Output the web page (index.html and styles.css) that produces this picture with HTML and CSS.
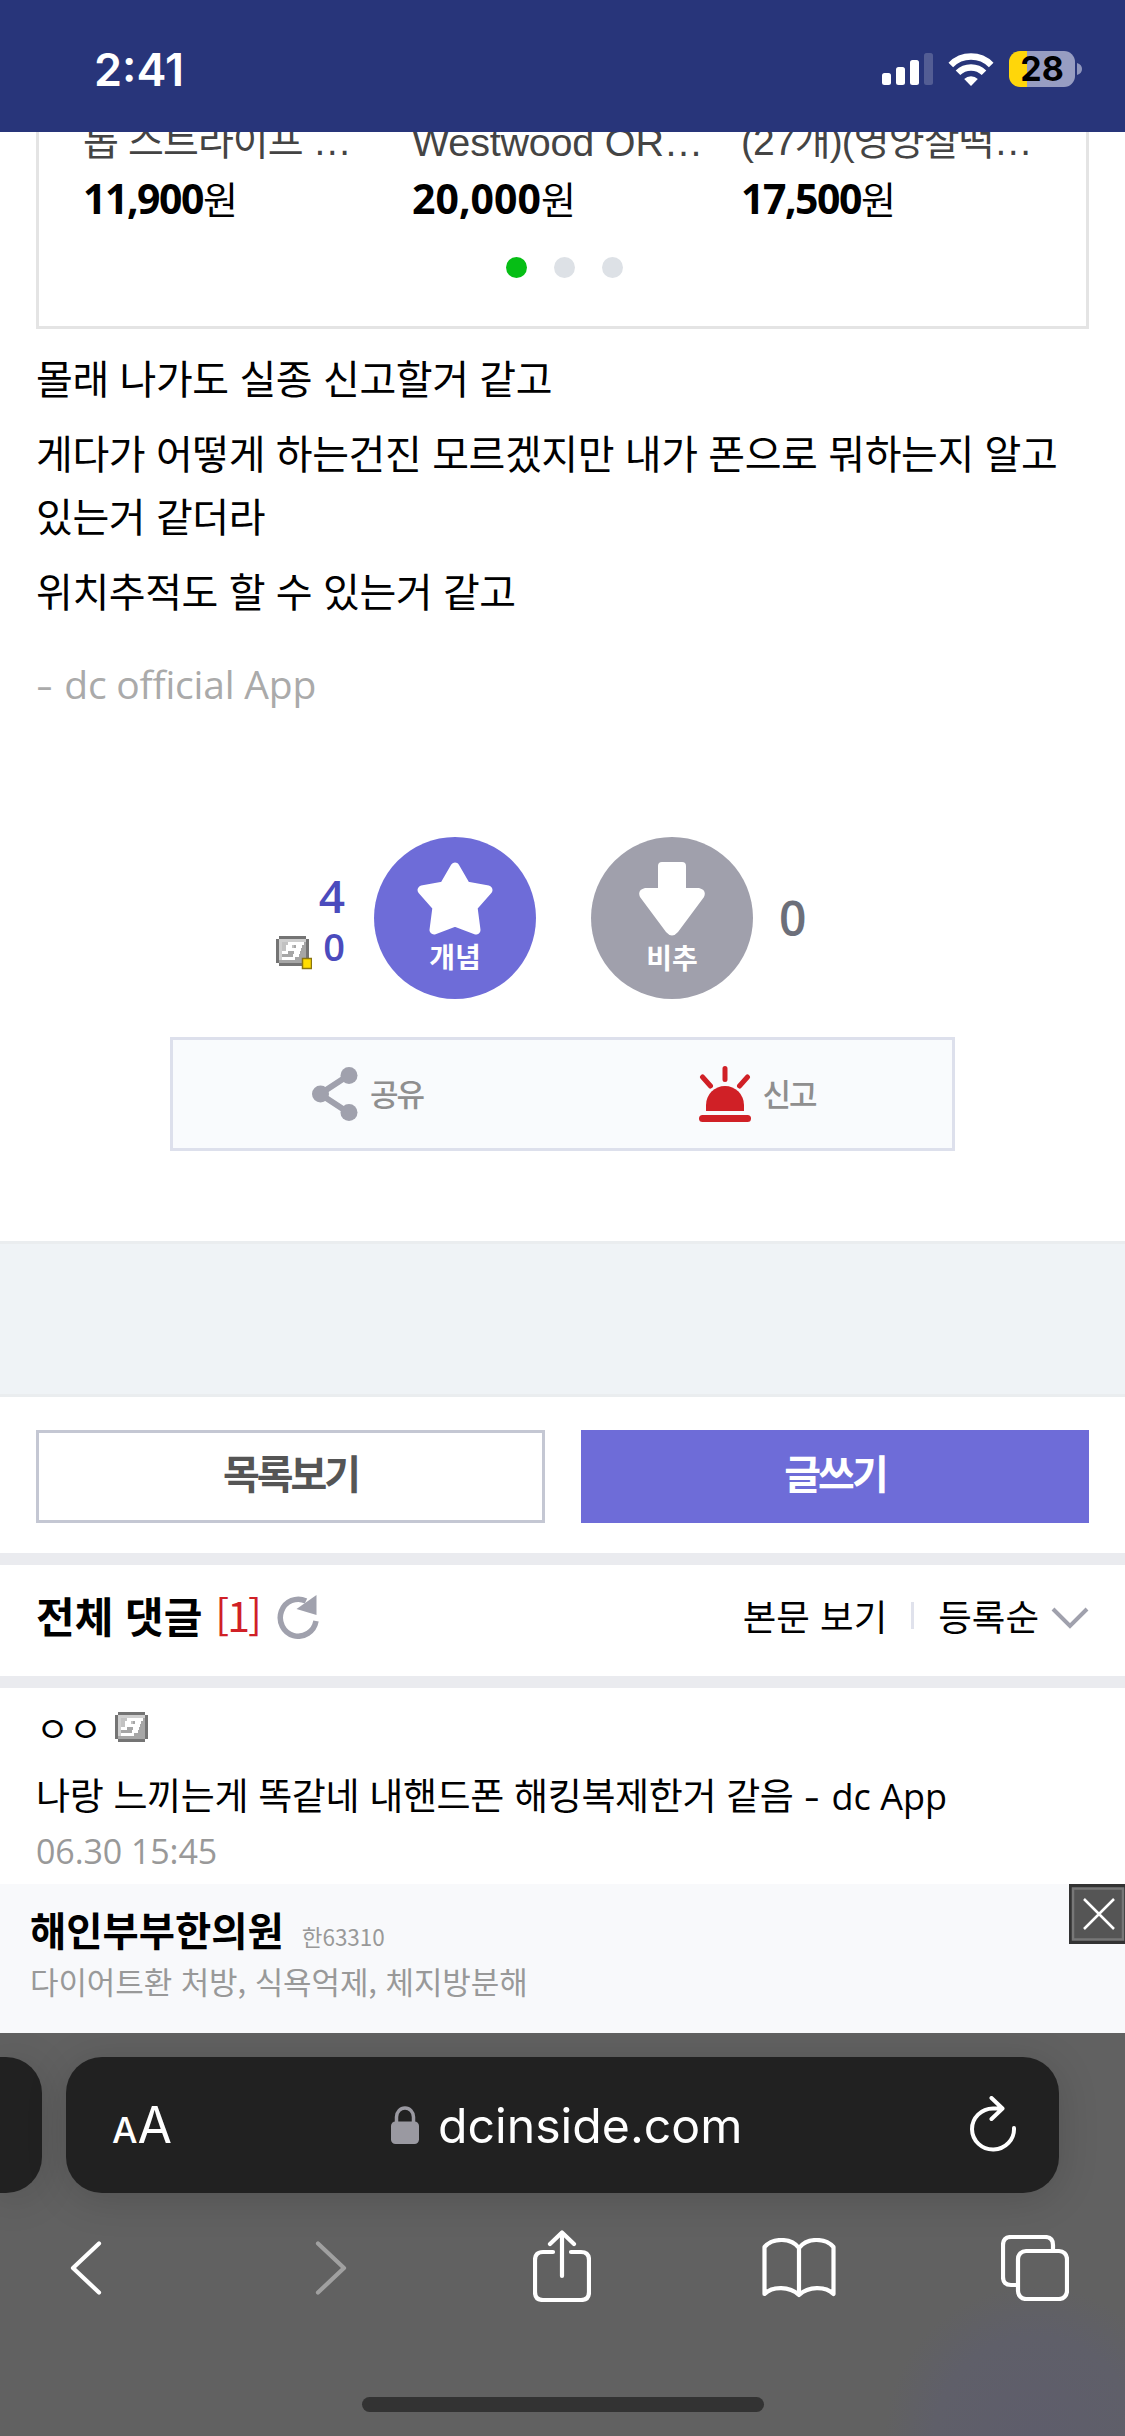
FILE: index.html
```html
<!DOCTYPE html>
<html lang="ko">
<head>
<meta charset="utf-8">
<title>dcinside.com</title>
<link rel="stylesheet" href="styles.css">
</head>
<body>
<div class="screen">
  <header class="status">
    <span class="clock">2:41</span>
    <svg class="signal" width="51" height="32" viewBox="0 0 51 32" fill="#fff"><rect y="20" width="9" height="12" rx="2.5"/><rect x="14" y="14" width="9" height="18" rx="2.5"/><rect x="28" y="7" width="9" height="25" rx="2.5"/><rect x="42" width="9" height="32" rx="2.500" opacity=".2"/></svg>
    <svg class="wifi" width="46" height="33" viewBox="0 0 46 33" fill="none" stroke="#fff" stroke-width="6.500"><path d="M2.800 12a28.500 28.500 0 0 1 40.400 0"/><path d="M10 19.800a18.500 18.500 0 0 1 26 0"/><path d="M23 33l-6.800-7a9.600 9.600 0 0 1 13.600 0z" fill="#fff" stroke="none"/></svg>
    <span class="battery">28</span>
    <svg class="nub" width="5" height="12" viewBox="0 0 5 12"><path d="M0 0q5 1.500 5 6t-5 6z" fill="#8f96bd"/></svg>
  </header>

  <main class="page">
    <section class="shop">
      <div class="goods">
        <div class="item"><p class="name ko">롭 스트라이프 …</p><p class="price"><b class="tight">11,900</b>원</p></div>
        <div class="item"><p class="name">Westwood OR…</p><p class="price"><b>20,000</b>원</p></div>
        <div class="item"><p class="name ko">(27개)(영양찰떡…</p><p class="price"><b class="tight">17,500</b>원</p></div>
      </div>
      <div class="dots"><i class="on"></i><i></i><i></i></div>
    </section>

    <article class="post">
      <p>몰래 나가도 실종 신고할거 같고</p>
      <p>게다가 어떻게 하는건진 모르겠지만 내가 폰으로 뭐하는지 알고 있는거 같더라</p>
      <p>위치추적도 할 수 있는거 같고</p>
      <p class="sign"><span class="dash">-</span> dc official App</p>
    </article>

    <section class="vote">
      <div class="up-count">
        <span class="total">4</span>
        <span class="fixed"><svg width="36" height="34" viewBox="0 0 36 34"><use href="#gal"/><rect x="26.500" y="22.500" width="9" height="10" fill="#fd0" stroke="#8a7510" stroke-width="1.500"/></svg>0</span>
      </div>
      <div class="circle good">
        <svg width="76" height="73" viewBox="0 0 76 73"><path d="M38 5L49 24L71 28L56 45L59 68L38 60L17 68L20 45L5 28L27 24Z" fill="#fff" stroke="#fff" stroke-width="9" stroke-linejoin="round"/></svg>
        <span>개념</span>
      </div>
      <div class="circle bad">
        <svg width="66" height="74" viewBox="0 0 66 74"><path d="M23 0h20q4 0 4 4v22h13q8 2 5 9L39 70q-6 7-12 0L1 35q-3-7 5-9h13V4q0-4 4-4z" fill="#fff"/></svg>
        <span>비추</span>
      </div>
      <span class="down-count">0</span>
    </section>

    <div class="actions">
      <a class="share"><svg width="46" height="54" viewBox="0 0 46 54" fill="#a0a1ad"><path d="M37 8L8 27l29 19" fill="none" stroke="#a0a1ad" stroke-width="6"/><circle cx="8.500" cy="27" r="8.500"/><circle cx="37" cy="8.500" r="8.500"/><circle cx="37" cy="45.500" r="8.500"/></svg><span>공유</span></a>
      <a class="report"><svg width="52" height="56" viewBox="0 0 52 56" fill="#d02026"><rect y="49" width="52" height="7" rx="3.500"/><path d="M7 45V39a19 19 0 0 1 38 0v6z"/><path d="M26 2.500v11M3.500 11l8 9M48.500 11l-8 9" stroke="#d02026" stroke-width="5" stroke-linecap="round"/></svg><span>신고</span></a>
    </div>

    <div class="banner"></div>

    <div class="buttons"><a class="btn list">목록보기</a><a class="btn write">글쓰기</a></div>

    <div class="comment-head">
      <h2>전체 댓글</h2><span class="count">[1]</span>
      <svg class="refresh" width="42" height="44" viewBox="0 0 42 44"><path d="M29 6A18 18.500 0 1 0 39 26" fill="none" stroke="#a0a1ad" stroke-width="5.500"/><path d="M39.500 0v20l-20-6z" fill="#a0a1ad"/></svg>
      <span class="view">본문 보기</span><i class="sep"></i><span class="order">등록순</span>
      <svg class="chev" width="38" height="24" viewBox="0 0 38 24"><path d="M2 3l17 17L36 3" fill="none" stroke="#a0a1ad" stroke-width="4"/></svg>
    </div>

    <article class="comment">
      <div class="author">ㅇㅇ<svg width="34" height="30" viewBox="0 0 34 30"><g id="gal"><path d="M3 0h27v3h3v24h-3v3H3v-3H0V3h3z" fill="#747474"/><path d="M3 3h27v24H3z" fill="#a6a6a6"/><path d="M3 3h27v3H3zM3 6h3v18H3z" fill="#cfcfcf"/><path d="M6 6h12v9H6z" fill="#c2c2c2"/><path d="M12 6h16v3H12zM10 9h6v3h-6zM20 9h6v3h-6zM10 12h15v3H10zM18 15h6v3h-6zM6 15h6v3H6zM17 18h6v3h-6zM6 21h13v3H6z" fill="#fff"/></g></svg></div>
      <p class="text">나랑 느끼는게 똑같네 내핸드폰 해킹복제한거 같음 <span class="dash">-</span><span> dc App</span></p>
      <time>06.30 15:45</time>
    </article>

    <aside class="ad">
      <div class="ad-line"><strong>해인부부한의원</strong><small>한63310</small></div>
      <p>다이어트환 처방, 식욕억제, 체지방분해</p>
      <svg class="close" width="56" height="60" viewBox="0 0 56 60"><path d="M0 0h56v60H0z" fill="#333"/><path d="M4 4.500h50v51H4z" fill="#555" stroke="#777" stroke-width="2.500"/><path d="M15 15l30 30M45 15L15 45" stroke="#fff" stroke-width="2.500"/></svg>
    </aside>
  </main>

  <footer class="browser">
    <div class="tabs">
      <div class="prev-tab"></div>
      <div class="url">
        <span class="aa"><small>A</small>A</span>
        <svg class="lock" width="28" height="38" viewBox="0 0 28 38"><path d="M5.500 18v-7a8.500 9 0 0 1 17 0v7" fill="none" stroke="#9a99a1" stroke-width="3.500"/><rect y="15.500" width="28" height="22.500" rx="4.500" fill="#9a99a1"/></svg>
        <span class="domain">dcinside.com</span>
        <svg class="reload" width="48" height="56" viewBox="0 0 48 56" fill="none" stroke="#fff" stroke-width="4" stroke-linecap="round" stroke-linejoin="round"><path d="M32 12.500H23A21 20.500 0 1 0 44 32M21.500 2l11 10.500-11 10.500"/></svg>
      </div>
    </div>
    <nav class="tools">
      <svg class="back" width="32" height="54" viewBox="0 0 32 54"><path d="M29 2.500L3 27l26 24.500" class="ln"/></svg>
      <svg class="fwd" width="32" height="54" viewBox="0 0 32 54"><path d="M3 2.500L29 27 3 51.500" class="ln"/></svg>
      <svg class="send" width="58" height="72" viewBox="0 0 58 72"><path d="M20 22H10q-8 0-8 8v32q0 8 8 8h38q8 0 8-8V30q0-8-8-8H38M29 46V2.500M17 14L29 2.500 41 14" class="ln"/></svg>
      <svg class="book" width="74" height="60" viewBox="0 0 74 60"><path d="M37 10C29-.5 11-.5 2.500 9v47c8-8 25-8 34.500 1 9.500-9 26.500-9 34.500-1V9C63-.5 45-.5 37 10zM37 10v47" class="ln"/></svg>
      <svg class="stack" width="68" height="66" viewBox="0 0 68 66"><path d="M17 50h-7q-8 0-8-8V10q0-8 8-8h34q8 0 8 8v5" class="ln"/><rect x="17" y="16" width="49" height="48" rx="8" class="ln"/></svg>
    </nav>
    <div class="home"></div>
  </footer>
</div>
</body>
</html>
```
FILE: styles.css
```css
* { box-sizing: border-box; }
body, p, h2 { margin: 0; }
svg { display: block; flex: none; }
.screen {
  width: 1125px; height: 2436px; overflow: hidden;
  display: flex; flex-direction: column;
  background: #fff; color: #000;
  font-family: "Noto Sans CJK KR", sans-serif;
}

.status {
  height: 132px; flex: none; background: #28357a; color: #fff;
  display: flex; align-items: center; padding: 6px 43px 0 94px;
}
.clock { font: 600 45px/1 Inter, sans-serif; flex: 1; }
.wifi { margin-left: 15px; }
.battery {
  margin-left: 15px; width: 66px; height: 36px; border-radius: 11px;
  background: linear-gradient(90deg, #ffd60a 18px, #979dc2 18px);
  color: #000; font: 700 34px/36px Inter, sans-serif; text-align: center;
}
.nub { margin-left: 2px; }

.page { height: 1901px; flex: none; display: flex; flex-direction: column; }
.shop {
  height: 197px; margin: 0 36px; border: solid #e4e4e4; border-width: 0 3px 3px;
  overflow: hidden; flex: none;
}
.goods { display: grid; grid-template-columns: 329px 329px 1fr; padding-left: 44px; margin-top: -18px; }
.name { font: 39.500px/56px "Liberation Sans", "Noto Sans CJK KR", sans-serif; color: #444; white-space: nowrap; height: 56px; letter-spacing: -.2px; }
.name.ko { font-size: 39px; letter-spacing: -.9px; }
.price { font-size: 38px; line-height: 56px; height: 58px; }
.price b { font-family: "Open Sans", sans-serif; font-size: 41px; }
.price .tight { letter-spacing: -1.500px; }
.dots { display: flex; justify-content: center; gap: 27px; margin-top: 29px; padding-left: 3px; }
.dots i { width: 21px; height: 21px; border-radius: 50%; background: #dde1e6; }
.dots .on { background: #06be15; }

.post { padding: 17px 36px 0; height: 507px; flex: none; font-size: 40px; line-height: 63px; letter-spacing: -.42px; }
.post p + p { margin-top: 12px; }
.post .sign { margin-top: 30px; color: #aaa; font-family: "Open Sans", sans-serif; font-size: 39px; letter-spacing: -.2px; }
.dash { display: inline-block; transform: scaleX(1.35); transform-origin: left; margin-right: 6px; }

.vote { height: 163px; flex: none; display: flex; align-items: center; font-family: "Open Sans", sans-serif; font-weight: 600; }
.up-count { width: 374px; padding: 4px 29px 0 0; display: flex; flex-direction: column; align-items: flex-end; color: #4b4bbd; }
.total { font-size: 46px; line-height: 52px; }
.fixed { font-size: 38px; line-height: 50px; display: flex; align-items: center; gap: 11px; }
.fixed svg { margin-top: 14px; }
.circle { width: 162px; height: 162px; border-radius: 50%; display: flex; flex-direction: column; align-items: center; padding-top: 25px; color: #fff; font: 700 28px/42px "Noto Sans CJK KR", sans-serif; }
.good { background: #6e6cd8; }
.bad { background: #a0a0ac; margin-left: 55px; }
.down-count { margin-left: 26px; font-size: 48px; color: #6c6f7a; }

.actions { margin: 38px 170px 0; height: 114px; flex: none; border: 3px solid #dde0ec; background: #f9fbfd; display: grid; grid-template-columns: 1fr 1fr; color: #8f8f8f; font-size: 31px; font-weight: 500; letter-spacing: -2px; }
.actions a { display: flex; align-items: center; gap: 12px; }
.actions span { padding-bottom: 4px; }
.share { padding-left: 139px; }
.report { padding-left: 136px; }

.banner { margin-top: 90px; height: 156px; flex: none; background: #eff3f6; border: solid #eaedef; border-width: 3px 0; }
.buttons { display: grid; grid-template-columns: 509px 508px; gap: 36px; padding: 33px 36px 30px; border-bottom: 12px solid #eaebef; }
.btn { height: 93px; border: 3px solid #c4c7d3; font-size: 40px; font-weight: 700; letter-spacing: -3px; line-height: 79px; text-align: center; color: #555; }
.write { background: #6e6cd8; border-color: #6e6cd8; color: #fff; }

.comment-head { height: 123px; flex: none; border-bottom: 12px solid #eaebef; display: flex; align-items: center; padding: 0 36px 10px; font-size: 36.500px; }
.comment-head h2 { font-size: 42px; font-weight: 700; padding-bottom: 2px; }
.count { color: #d02026; margin-left: 13px; font-size: 41px; letter-spacing: -2px; padding-bottom: 3px; }
.refresh { margin-left: 17px; margin-right: auto; margin-top: 2px; }
.sep { width: 3px; height: 27px; background: #e0e2ec; margin: 0 24px; }
.chev { margin-left: 12px; margin-top: 4px; }

.comment { height: 196px; flex: none; padding: 12px 36px 0; }
.author { display: flex; align-items: center; font-size: 36px; line-height: 54px; gap: 13px; }
.text { font-size: 37px; line-height: 56px; margin-top: 12px; letter-spacing: -.35px; white-space: pre; }
.text span { font-family: "Open Sans", sans-serif; font-size: 36px; letter-spacing: 0; }
.comment .text .dash { margin-right: 7px; }
.comment time { display: block; font: 34px/50px "Open Sans", sans-serif; color: #999; margin-top: 1px; letter-spacing: -.1px; }

.ad { position: relative; height: 149px; flex: none; background: #f8f9fb; padding: 17px 30px; }
.ad-line { display: flex; align-items: baseline; gap: 18px; height: 57px; line-height: 56px; }
.ad strong { font-size: 39.400px; font-weight: 700; }
.ad small { font-size: 22.500px; color: #999; }
.ad p { font-size: 31px; line-height: 46px; color: #999; letter-spacing: -.1px; }
.close { position: absolute; right: 0; top: 0; }

.browser { height: 403px; flex: none; background: radial-gradient(circle at 1035px 403px, #5e5d6b 0, #5f5f69 100px, #616161 150px); color: #fff; }
.tabs { display: flex; gap: 24px; padding-top: 24px; }
.prev-tab, .url { height: 136px; background: #212121; box-shadow: 0 6px 40px rgba(0,0,0,.15); }
.prev-tab { width: 42px; border-radius: 0 36px 36px 0; }
.url { width: 993px; border-radius: 36px; display: flex; align-items: center; padding: 0 41px 0 46px; font-family: Inter, sans-serif; }
.aa { font-size: 50px; width: 278px; }
.aa small { font-size: 36px; font-weight: 500; }
.domain { font-size: 48.200px; margin-left: 19px; flex: 1; padding-top: 1px; }
.lock { margin-left: 1px; }
.reload { margin-top: -3px; }
.tools { display: flex; align-items: center; height: 72px; margin-top: 37px; padding-left: 70px; }
.ln { fill: none; stroke: #fff; stroke-width: 4.200px; stroke-linecap: round; stroke-linejoin: round; }
.back, .fwd { margin-top: 4px; }
.fwd { margin-left: 213px; opacity: .4; }
.send { margin-left: 186px; }
.book { margin-left: 171px; margin-top: 3px; }
.stack { margin-left: 165px; margin-top: 3px; }
.home { width: 402px; height: 15px; border-radius: 8px; background: #333; margin: 95px auto 0; }
```
